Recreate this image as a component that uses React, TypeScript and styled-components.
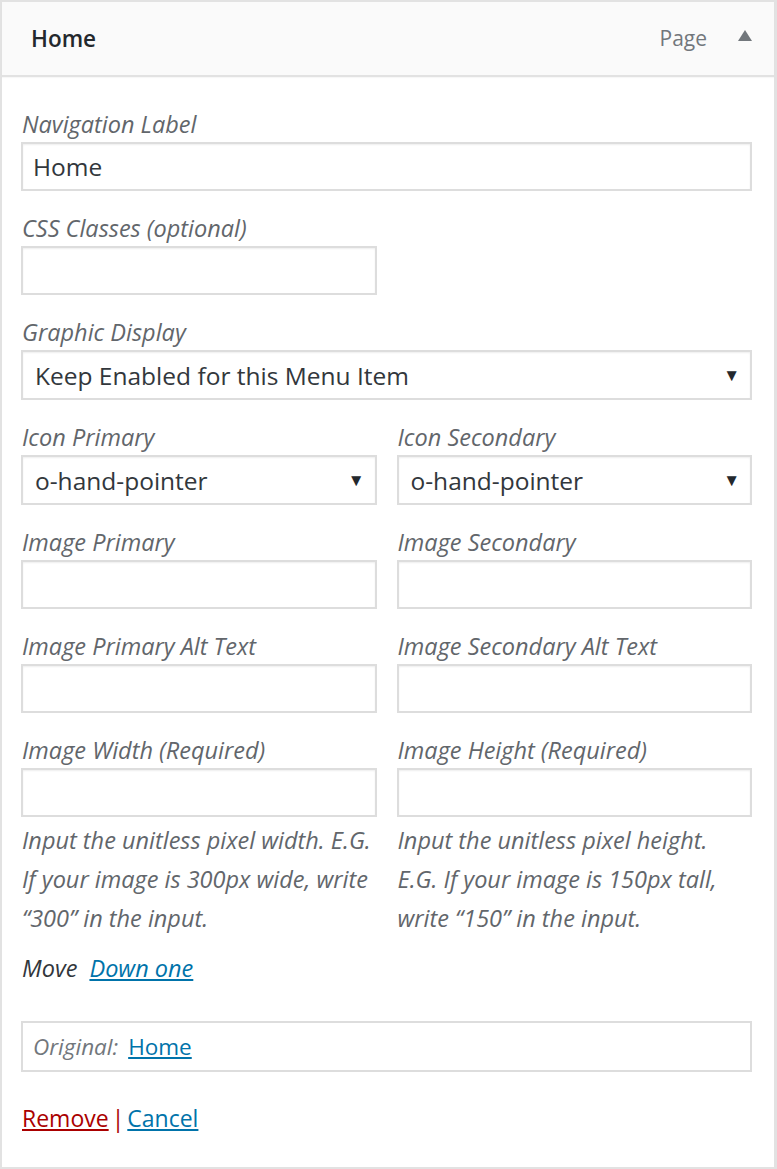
import styled, { createGlobalStyle } from "styled-components";

const GlobalStyle = createGlobalStyle`
  html, body {
    margin: 0;
    padding: 0;
    background: #fff;
  }
  body {
    font-family: "Open Sans", "Noto Sans", Arial, sans-serif;
    color: #32373c;
  }
  * {
    box-sizing: border-box;
  }
`;

const Panel = styled.div`
  width: 777px;
  height: 1169px;
  border: 2px solid #e2e2e2;
  border-right-width: 3px;
  background: #fff;
  display: flex;
  flex-direction: column;
`;

const Header = styled.div`
  height: 75px;
  flex-shrink: 0;
  background: #fafafa;
  border-bottom: 2px solid #e2e2e2;
  box-shadow: 0 1px 1px rgba(0, 0, 0, 0.03);
  display: flex;
  align-items: center;
  padding: 0 22px 0 29px;
`;

const Title = styled.div`
  flex: 1;
  font-size: 22.5px;
  font-weight: 600;
  color: #23282d;
  padding-bottom: 1px;
`;

const ItemType = styled.span`
  font-size: 21px;
  color: #72777c;
  padding-bottom: 1px;
`;

const Toggle = styled.span`
  width: 0;
  height: 0;
  margin-left: 31px;
  margin-bottom: 7px;
  border-left: 7px solid transparent;
  border-right: 7px solid transparent;
  border-bottom: 11px solid #72777c;
`;

const Body = styled.div`
  padding: 32px 22px 0 19px;
  display: flex;
  flex-direction: column;
`;

const Row = styled.div`
  display: grid;
  grid-template-columns: 1fr 1fr;
  column-gap: 20px;
`;

const Field = styled.div<{ $half?: boolean }>`
  margin-bottom: 22px;
  display: flex;
  flex-direction: column;
  width: ${(p) => (p.$half ? "356px" : "auto")};
`;

const Label = styled.label`
  font-size: 23.5px;
  line-height: 31px;
  font-style: italic;
  color: #62666b;
  margin-bottom: 2px;
  margin-left: 1px;
  white-space: nowrap;
`;

const TextInput = styled.input`
  height: 49px;
  width: 100%;
  border: 2px solid #dddddd;
  box-shadow: inset 0 1px 2px rgba(0, 0, 0, 0.07);
  background: #fff;
  padding: 0 10px;
  font-family: inherit;
  font-size: 24.5px;
  color: #32373c;
  outline: none;
`;

const SelectBox = styled.div`
  height: 50px;
  border: 2px solid #dddddd;
  box-shadow: inset 0 1px 2px rgba(0, 0, 0, 0.07);
  background: #fff;
  display: flex;
  align-items: center;
  padding: 0 10px 0 12px;
  font-size: 24.5px;
  color: #32373c;
`;

const SelectText = styled.span`
  flex: 1;
  white-space: nowrap;
`;

const Arrow = styled.span`
  font-size: 17px;
  color: #23282d;
  margin-top: -2px;
`;

const Description = styled.div`
  font-size: 23.5px;
  line-height: 39px;
  font-style: italic;
  color: #62666b;
  margin: 4px 0 0 1px;
`;

const MoveLine = styled.div`
  font-size: 23.5px;
  line-height: 39px;
  font-style: italic;
  color: #32373c;
  margin: -11px 0 0 1px;
`;

const Link = styled.a<{ $danger?: boolean }>`
  color: ${(p) => (p.$danger ? "#a00" : "#0073aa")};
  text-decoration: underline;
  cursor: pointer;
`;

const MoveLink = styled(Link)`
  margin-left: 12px;
`;

const Original = styled.div`
  margin-top: 33px;
  height: 51px;
  border: 2px solid #dddddd;
  display: flex;
  align-items: center;
  padding: 0 10px;
  font-size: 22.5px;
`;

const OriginalLabel = styled.span`
  font-style: italic;
  color: #72777c;
  margin-right: 10px;
`;

const Actions = styled.div`
  margin: 30px 0 0 1px;
  font-size: 23px;
  color: #32373c;
`;

const Sep = styled.span`
  margin: 0 3px;
  color: #a00;
`;

function Select({ value }: { value: string }) {
  return (
    <SelectBox>
      <SelectText>{value}</SelectText>
      <Arrow>▼</Arrow>
    </SelectBox>
  );
}

function App() {
  return (
    <>
      <GlobalStyle />
      <Panel>
        <Header>
          <Title>Home</Title>
          <ItemType>Page</ItemType>
          <Toggle />
        </Header>
        <Body>
          <Field>
            <Label>Navigation Label</Label>
            <TextInput defaultValue="Home" />
          </Field>
          <Field $half>
            <Label>CSS Classes (optional)</Label>
            <TextInput />
          </Field>
          <Field>
            <Label>Graphic Display</Label>
            <Select value="Keep Enabled for this Menu Item" />
          </Field>
          <Row>
            <Field>
              <Label>Icon Primary</Label>
              <Select value="o-hand-pointer" />
            </Field>
            <Field>
              <Label>Icon Secondary</Label>
              <Select value="o-hand-pointer" />
            </Field>
            <Field>
              <Label>Image Primary</Label>
              <TextInput />
            </Field>
            <Field>
              <Label>Image Secondary</Label>
              <TextInput />
            </Field>
            <Field>
              <Label>Image Primary Alt Text</Label>
              <TextInput />
            </Field>
            <Field>
              <Label>Image Secondary Alt Text</Label>
              <TextInput />
            </Field>
            <Field>
              <Label>Image Width (Required)</Label>
              <TextInput />
              <Description>
                Input the unitless pixel width. E.G. If your image is 300px wide,
                write “300” in the input.
              </Description>
            </Field>
            <Field>
              <Label>Image Height (Required)</Label>
              <TextInput />
              <Description>
                Input the unitless pixel height. E.G. If your image is 150px tall,
                write “150” in the input.
              </Description>
            </Field>
          </Row>
          <MoveLine>
            Move<MoveLink>Down one</MoveLink>
          </MoveLine>
          <Original>
            <OriginalLabel>Original:</OriginalLabel>
            <Link>Home</Link>
          </Original>
          <Actions>
            <Link $danger>Remove</Link>
            <Sep>|</Sep>
            <Link>Cancel</Link>
          </Actions>
        </Body>
      </Panel>
    </>
  );
}

export default App;
